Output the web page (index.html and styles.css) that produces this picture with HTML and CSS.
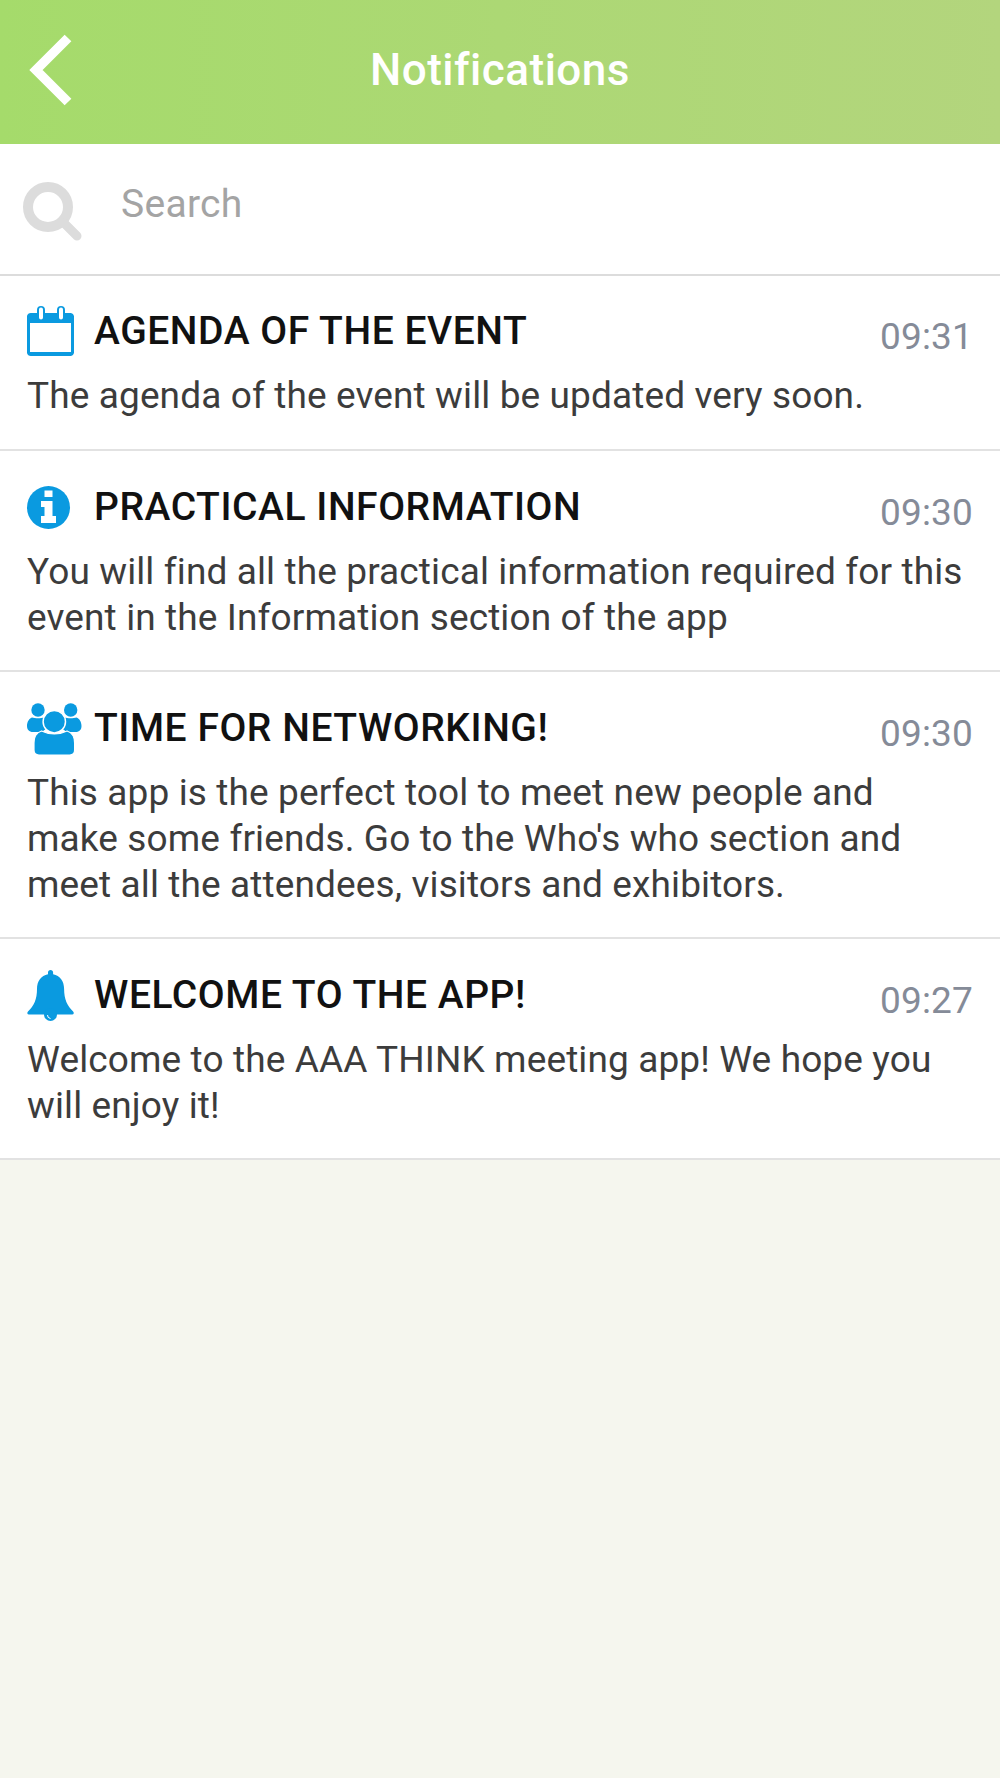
FILE: index.html
```html
<!DOCTYPE html>
<html lang="en">
<head>
<meta charset="UTF-8">
<title>Notifications</title>
<link rel="stylesheet" href="styles.css">
</head>
<body>
<header class="topbar">
  <svg class="back-icon" viewBox="0 0 44 72" width="44" height="72"><path d="M39 4 L7 36 L39 68" fill="none" stroke="#fff" stroke-width="9.5"/></svg>
  <h1>Notifications</h1>
</header>
<div class="search">
  <svg class="search-icon" viewBox="0 0 60 60" width="60" height="60"><circle cx="26" cy="26" r="20" fill="none" stroke="#dcdcdc" stroke-width="10"/><path d="M42 42 L55 55" fill="none" stroke="#dcdcdc" stroke-width="9" stroke-linecap="round"/></svg>
  <span class="search-label">Search</span>
</div>
<ul class="notif-list">
  <li class="notif">
    <div class="notif-head">
      <svg class="notif-icon" viewBox="0 0 48 52" width="48" height="52"><path fill="#0a9ae0" d="M4 8h6v-3a4 4 0 0 1 8 0v3h12v-3a4 4 0 0 1 8 0v3h6a4 4 0 0 1 3 3v37a4 4 0 0 1-3 3H4a4 4 0 0 1-4-3V11a4 4 0 0 1 4-3z"/><path fill="#fff" d="M3 18h41v29H3zM12 4.500a2 2 0 0 1 4 0v8a2 2 0 0 1-4 0zM32 4.500a2 2 0 0 1 4 0v8a2 2 0 0 1-4 0z"/></svg>
      <h2>AGENDA OF THE EVENT</h2>
      <time>09:31</time>
    </div>
    <p>The agenda of the event will be updated very soon.</p>
  </li>
  <li class="notif">
    <div class="notif-head">
      <svg class="notif-icon" viewBox="0 0 48 52" width="48" height="52"><g transform="translate(0 -1)"><circle cx="21.500" cy="27.500" r="21.500" fill="#0a9ae0"/><path fill="#fff" d="M17.500 10.500h8v6.500h-8zM14 21h11.500v15H29v7H14v-7h3.500v-9H14z"/></g></svg>
      <h2>PRACTICAL INFORMATION</h2>
      <time>09:30</time>
    </div>
    <p>You will find all the practical information required for this event in the Information section of the app</p>
  </li>
  <li class="notif">
    <div class="notif-head">
      <svg class="notif-icon notif-icon-wide" viewBox="0 0 56 52" width="56" height="52"><g transform="translate(0 1)" fill="#0a9ae0"><circle cx="11" cy="7" r="6.700"/><circle cx="43.700" cy="7" r="6.700"/><path d="M5 14.500c3 1 9 1 12 0 1 5 3 8 5 10-3 1-5 2.500-6.500 4.500H6c-4 0-6-2.500-6-6 0-4 2-7.500 5-8.500zM49.500 14.500c-3 1-9 1-12 0-1 5-3 8-5 10 3 1 5 2.500 6.500 4.500h9.500c4 0 6-2.500 6-6 0-4-2-7.500-5-8.500z"/><path stroke="#fff" stroke-width="1.200" d="M7 40c0-6 3-10.500 7.500-12 3 1.500 7.500 3 12.800 3s9.800-1.500 12.800-3c4.500 1.500 7.500 6 7.500 12v7c0 3-2 5-5 5H12c-3 0-5-2-5-5z"/><circle cx="27.300" cy="18.700" r="11.200" stroke="#fff" stroke-width="1.500"/></g></svg>
      <h2>TIME FOR NETWORKING!</h2>
      <time>09:30</time>
    </div>
    <p>This app is the perfect tool to meet new people and make some friends. Go to the Who's who section and meet all the attendees, visitors and exhibitors.</p>
  </li>
  <li class="notif">
    <div class="notif-head">
      <svg class="notif-icon" viewBox="0 0 48 52" width="48" height="52"><g transform="translate(0 1)" fill="#0a9ae0"><path d="M23.500 0c1.600 0 2.600 1.200 2.600 2.600v1.600c7 1.200 11 7 11 14.800 0 10 3 17 9 22.500 1.200 1.100.8 3-1 3H2c-1.800 0-2.200-1.900-1-3 6-5.500 9-12.500 9-22.500 0-7.800 4-13.600 11-14.800V2.600C21 1.200 22 0 23.500 0z"/><circle cx="23.500" cy="44.500" r="6.500"/><path d="M20.500 45a3.500 3.500 0 0 0 3 3.500" fill="none" stroke="#fff" stroke-width="1"/></g></svg>
      <h2>WELCOME TO THE APP!</h2>
      <time>09:27</time>
    </div>
    <p>Welcome to the AAA THINK meeting app! We hope you will enjoy it!</p>
  </li>
</ul>
</body>
</html>
```

FILE: styles.css
```css
body {
  margin: 0;
  min-height: 1778px;
  background-color: #f5f6ee;
  font-family: Roboto, "Liberation Sans", sans-serif;
}

.topbar {
  position: relative;
  height: 144px;
  display: flex;
  align-items: center;
  justify-content: center;
  background: linear-gradient(to right, #a5db6b, #b3d57d);
}

.topbar h1 {
  margin: -5px 0 0;
  font-size: 44px;
  font-weight: 500;
  letter-spacing: 0.5px;
  color: #fff;
}

.back-icon {
  position: absolute;
  left: 29px;
  top: 34px;
}

.search {
  height: 130px;
  display: flex;
  align-items: center;
  padding-left: 22px;
  background: #fff;
  border-bottom: 2px solid #dcdcdc;
}

.search-label {
  margin-left: 39px;
  margin-top: -10px;
  font-size: 39px;
  letter-spacing: 0.3px;
  color: #a4a4a4;
}

.search-icon {
  margin-top: 4px;
  overflow: visible;
}

.notif-list {
  margin: 0;
  padding: 0;
  list-style: none;
}

.notif {
  padding: 30px 27px 29px;
  background: #fff;
  border-bottom: 2px solid #e2e2e2;
}

.notif:first-child {
  padding: 29px 27px 30px;
}

.notif-head {
  display: flex;
  align-items: center;
  height: 52px;
}

.notif-icon {
  flex: none;
  margin-right: 19px;
  overflow: visible;
}

.notif-icon-wide {
  margin-right: 11px;
}

.notif-head h2 {
  flex: 1;
  margin: 0;
  font-size: 39px;
  font-weight: 500;
  letter-spacing: 0.55px;
  color: #111;
}

.notif-head time {
  position: relative;
  top: 5px;
  font-size: 37px;
  letter-spacing: 0.15px;
  color: #858b98;
}

.notif p {
  margin: 16px 0 0;
  font-size: 37px;
  line-height: 46px;
  letter-spacing: 0.12px;
  color: #3c3c3c;
}
```
